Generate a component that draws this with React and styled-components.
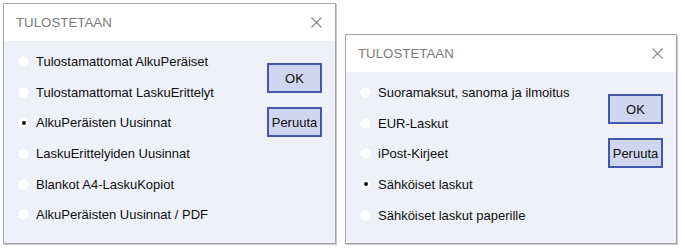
import React from "react";
import styled, { createGlobalStyle } from "styled-components";

const GlobalStyle = createGlobalStyle`
  body {
    margin: 0;
    background: #ffffff;
    font-family: "Liberation Sans", Arial, sans-serif;
  }
`;

const leftOptions = [
  "Tulostamattomat AlkuPeräiset",
  "Tulostamattomat LaskuErittelyt",
  "AlkuPeräisten Uusinnat",
  "LaskuErittelyiden Uusinnat",
  "Blankot A4-LaskuKopiot",
  "AlkuPeräisten Uusinnat / PDF",
];

const rightOptions = [
  "Suoramaksut, sanoma ja ilmoitus",
  "EUR-Laskut",
  "iPost-Kirjeet",
  "Sähköiset laskut",
  "Sähköiset laskut paperille",
];

function CloseIcon() {
  return (
    <svg width="11" height="11" viewBox="0 0 11 11">
      <path d="M0.5 0.5 L10.5 10.5 M10.5 0.5 L0.5 10.5" stroke="#8a8a8a" strokeWidth="1.1" fill="none" />
    </svg>
  );
}

function Dialog({ options, selected, width, height }) {
  return (
    <DialogBox $width={width} $height={height}>
      <Header>
        <Title>TULOSTETAAN</Title>
        <CloseIcon />
      </Header>
      <Body>
        <OptionList>
          {options.map((label, i) => (
            <Option key={label}>
              <Radio $checked={i === selected} />
              <span>{label}</span>
            </Option>
          ))}
        </OptionList>
        <Buttons>
          <Button>OK</Button>
          <Button>Peruuta</Button>
        </Buttons>
      </Body>
    </DialogBox>
  );
}

export default function App() {
  return (
    <>
      <GlobalStyle />
      <Page>
        <Dialog options={leftOptions} selected={2} width={333} height={241} />
        <Dialog options={rightOptions} selected={3} width={332} height={210} />
      </Page>
    </>
  );
}

const Page = styled.div`
  display: flex;
  align-items: flex-end;
  gap: 9px;
  padding: 3px;
  width: 685px;
  box-sizing: border-box;
`;

const DialogBox = styled.div`
  width: ${(p) => p.$width}px;
  height: ${(p) => p.$height}px;
  box-sizing: border-box;
  border: 1px solid #a3a3a3;
  box-shadow: 1px 1px 0 #c9c9c9;
  background: #eef1f9;
  display: flex;
  flex-direction: column;
`;

const Header = styled.div`
  height: 37px;
  flex-shrink: 0;
  background: #ffffff;
  display: flex;
  align-items: center;
  justify-content: space-between;
  padding: 0 13px 0 12px;
`;

const Title = styled.div`
  font-size: 13.3px;
  color: #7b7b7b;
`;

const Body = styled.div`
  flex: 1;
  display: flex;
  justify-content: space-between;
  padding: 5px 13px 0 14px;
`;

const OptionList = styled.div`
  display: flex;
  flex-direction: column;
`;

const Option = styled.div`
  height: 30.7px;
  display: flex;
  align-items: center;
  gap: 7px;
  font-size: 13px;
  color: #0e0e0e;
`;

const Radio = styled.span`
  width: 11px;
  height: 11px;
  border-radius: 50%;
  background: #ffffff;
  box-shadow: 0 0 1px rgba(0, 0, 0, 0.12);
  display: flex;
  align-items: center;
  justify-content: center;

  &::after {
    content: "";
    width: 4px;
    height: 4px;
    border-radius: 50%;
    background: ${(p) => (p.$checked ? "#111111" : "transparent")};
  }
`;

const Buttons = styled.div`
  display: flex;
  flex-direction: column;
  gap: 14px;
  padding-top: 17px;
`;

const Button = styled.div`
  width: 55px;
  height: 30px;
  box-sizing: border-box;
  border: 2px solid #4457a8;
  background: #cfd6ef;
  display: flex;
  align-items: center;
  justify-content: center;
  font-size: 13px;
  color: #0e0e0e;
`;
